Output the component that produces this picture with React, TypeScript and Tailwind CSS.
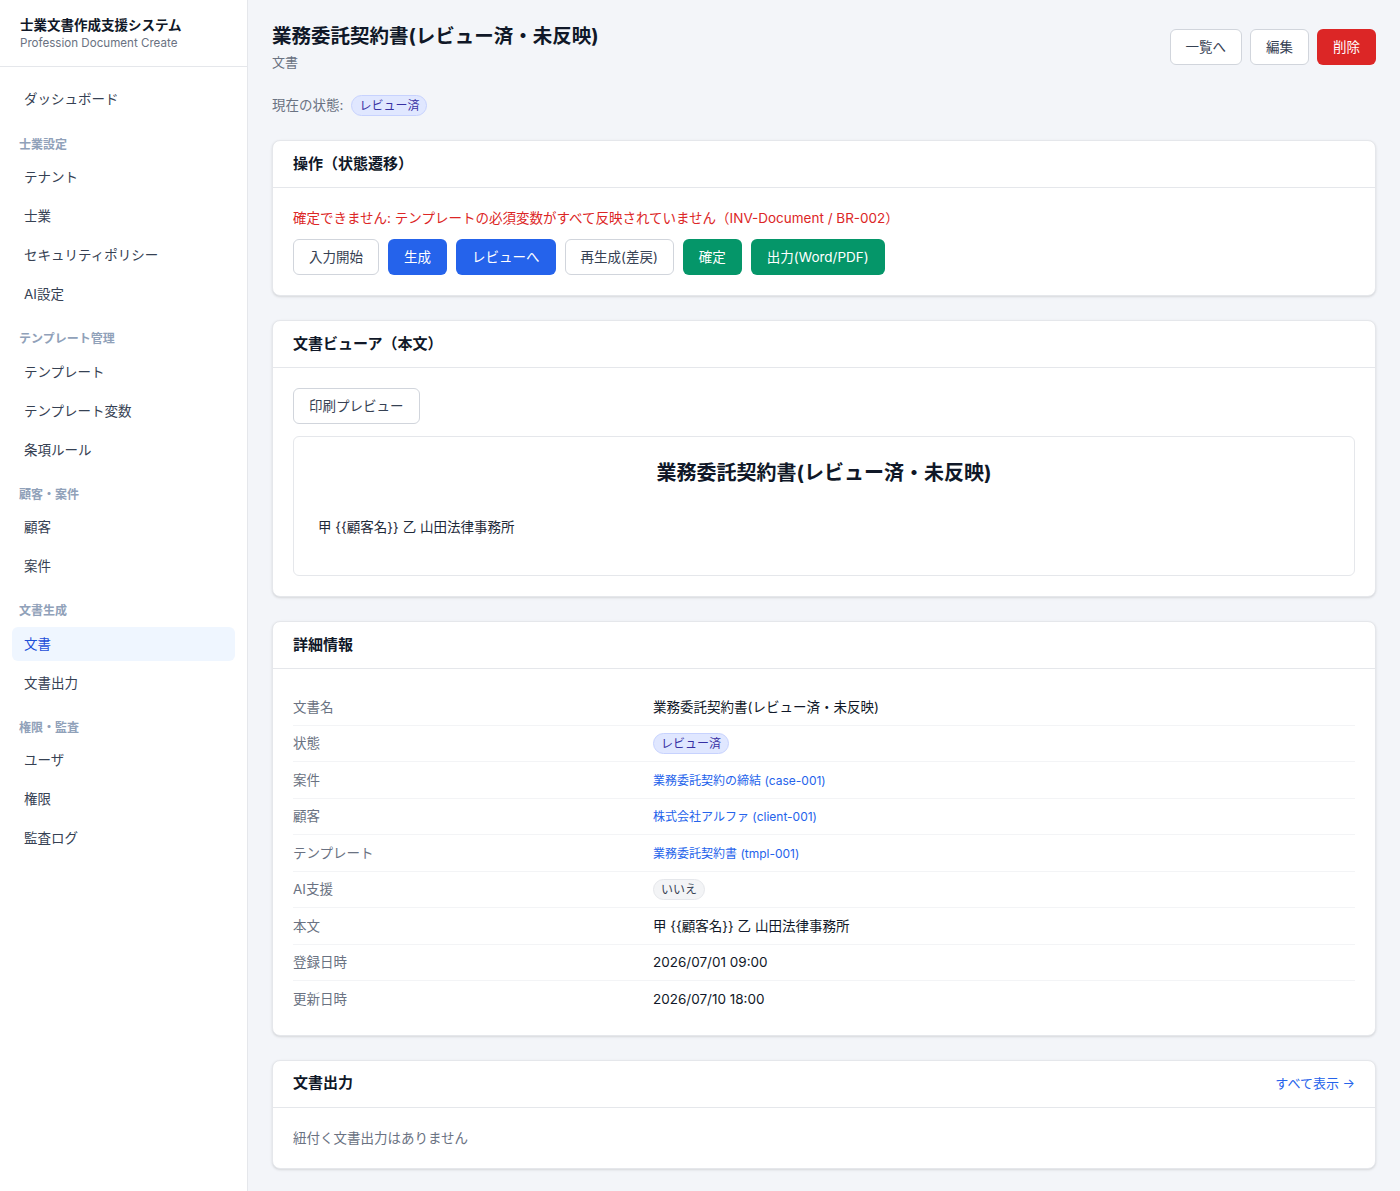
import clsx from "clsx";

interface NavItem {
  name: string;
  active?: boolean;
}

interface NavGroup {
  label?: string;
  items: NavItem[];
}

const navGroups: NavGroup[] = [
  { items: [{ name: "ダッシュボード" }] },
  {
    label: "士業設定",
    items: [{ name: "テナント" }, { name: "士業" }, { name: "セキュリティポリシー" }, { name: "AI設定" }],
  },
  {
    label: "テンプレート管理",
    items: [{ name: "テンプレート" }, { name: "テンプレート変数" }, { name: "条項ルール" }],
  },
  { label: "顧客・案件", items: [{ name: "顧客" }, { name: "案件" }] },
  { label: "文書生成", items: [{ name: "文書", active: true }, { name: "文書出力" }] },
  { label: "権限・監査", items: [{ name: "ユーザ" }, { name: "権限" }, { name: "監査ログ" }] },
];

const font = { fontFamily: '"Inter", "Noto Sans CJK JP", sans-serif' };

function Sidebar() {
  return (
    <aside className="w-[248px] shrink-0 bg-white border-r border-gray-200">
      <div className="px-5 pt-[15px] pb-[15px] border-b border-gray-200">
        <div className="text-[13.5px] leading-5 font-bold text-gray-900">士業文書作成支援システム</div>
        <div className="text-[11.6px] leading-4 text-gray-500">Profession Document Create</div>
      </div>
      <nav className="px-3 pt-[15px]">
        {navGroups.map((group, i) => (
          <div key={i} className={clsx(i > 0 && (i === 1 ? "mt-[20.5px]" : "mt-[19.5px]"))}>
            {group.label && (
              <div className="px-[7px] mb-2 h-4 text-[12px] leading-4 font-semibold text-slate-400">
                {group.label}
              </div>
            )}
            <div className="flex flex-col gap-[5px]">
              {group.items.map((item) => (
                <div
                  key={item.name}
                  className={clsx(
                    "h-[34px] px-3 flex items-center rounded-md text-[13.5px]",
                    item.active ? "bg-blue-50 text-[#1d4ed8]" : "text-gray-700"
                  )}
                >
                  {item.name}
                </div>
              ))}
            </div>
          </div>
        ))}
      </nav>
    </aside>
  );
}

function Badge({ children, tone }: { children: string; tone: "indigo" | "gray" }) {
  return (
    <span
      className={clsx(
        "inline-flex items-center h-[21px] px-[7px] rounded-full border text-[12px]",
        tone === "indigo"
          ? "bg-[#e0e7ff] border-[#c7d2fe] text-[#3730a3]"
          : "bg-gray-100 border-gray-200 text-gray-700"
      )}
    >
      {children}
    </span>
  );
}

function Card({
  title,
  right,
  bodyClass,
  children,
}: {
  title: string;
  right?: React.ReactNode;
  bodyClass?: string;
  children: React.ReactNode;
}) {
  return (
    <section className="bg-white border border-gray-200 rounded-lg shadow-sm mb-6">
      <div className="px-5 h-[47px] flex items-center justify-between border-b border-gray-200">
        <h2 className="text-[15px] font-bold text-gray-900">{title}</h2>
        {right}
      </div>
      <div className={clsx("p-5", bodyClass)}>{children}</div>
    </section>
  );
}

const base = "h-[36px] px-[15px] rounded-md border text-[13.5px]";
const outline = clsx(base, "border-gray-300 bg-white text-gray-700");
const blue = clsx(base, "border-transparent bg-[#2563eb] text-white");
const green = clsx(base, "border-transparent bg-[#059669] text-white");

const actions = [
  { label: "入力開始", cls: outline },
  { label: "生成", cls: blue },
  { label: "レビューへ", cls: blue },
  { label: "再生成(差戻)", cls: outline },
  { label: "確定", cls: green },
  { label: "出力(Word/PDF)", cls: green },
];

interface Row {
  label: string;
  value: React.ReactNode;
}

const link = "text-[12px] text-[#2563eb]";

const rows: Row[] = [
  { label: "文書名", value: "業務委託契約書(レビュー済・未反映)" },
  { label: "状態", value: <Badge tone="indigo">レビュー済</Badge> },
  { label: "案件", value: <span className={link}>業務委託契約の締結 (case-001)</span> },
  { label: "顧客", value: <span className={link}>株式会社アルファ (client-001)</span> },
  { label: "テンプレート", value: <span className={link}>業務委託契約書 (tmpl-001)</span> },
  { label: "AI支援", value: <Badge tone="gray">いいえ</Badge> },
  { label: "本文", value: "甲 {{顧客名}} 乙 山田法律事務所" },
  { label: "登録日時", value: "2026/07/01 09:00" },
  { label: "更新日時", value: "2026/07/10 18:00" },
];

export default function App() {
  return (
    <div className="flex min-h-screen bg-[#f3f5f9]" style={font}>
      <Sidebar />
      <main className="flex-1 px-6 pt-[22px] pb-0">
        <div className="flex items-center justify-between">
          <div>
            <h1 className="text-[19.5px] leading-7 font-bold text-gray-900">業務委託契約書(レビュー済・未反映)</h1>
            <div className="text-[13px] leading-5 mt-[2px] text-gray-500">文書</div>
          </div>
          <div className="flex gap-2">
            <button className={outline}>一覧へ</button>
            <button className={outline}>編集</button>
            <button className={clsx(base, "border-transparent bg-[#dc2626] text-white")}>削除</button>
          </div>
        </div>

        <div className="mt-[23px] mb-6 flex items-center gap-2 text-[13.5px] text-gray-500">
          <span>現在の状態:</span>
          <Badge tone="indigo">レビュー済</Badge>
        </div>

        <Card title="操作（状態遷移）">
          <p className="text-[13.5px] leading-5 text-[#dc2626]">
            確定できません: テンプレートの必須変数がすべて反映されていません（INV-Document / BR-002）
          </p>
          <div className="mt-[11px] flex gap-[9px]">
            {actions.map((a) => (
              <button key={a.label} className={a.cls}>
                {a.label}
              </button>
            ))}
          </div>
        </Card>

        <Card title="文書ビューア（本文）">
          <button className={outline}>印刷プレビュー</button>
          <div className="mt-3 border border-gray-200 rounded-md px-6 pt-[22px] pb-[36px]">
            <h3 className="text-center text-[20px] leading-7 font-bold text-gray-900">業務委託契約書(レビュー済・未反映)</h3>
            <p className="mt-[28px] text-[13.5px] leading-6 text-gray-800">甲 {"{{顧客名}}"} 乙 山田法律事務所</p>
          </div>
        </Card>

        <Card title="詳細情報" bodyClass="pb-[17px]">
          <div className="flex flex-col">
            {rows.map((r, i) => (
              <div
                key={r.label}
                className={clsx("flex items-center h-[36.5px]", i < rows.length - 1 && "border-b border-gray-100")}
              >
                <div className="w-[360px] shrink-0 text-[13.5px] text-gray-500">{r.label}</div>
                <div className="text-[13.5px] text-gray-900">{r.value}</div>
              </div>
            ))}
          </div>
        </Card>

        <Card title="文書出力" right={<span className="text-[13px] text-[#2563eb]">すべて表示 →</span>}>
          <p className="text-[13.5px] leading-5 text-gray-500">紐付く文書出力はありません</p>
        </Card>
      </main>
    </div>
  );
}
